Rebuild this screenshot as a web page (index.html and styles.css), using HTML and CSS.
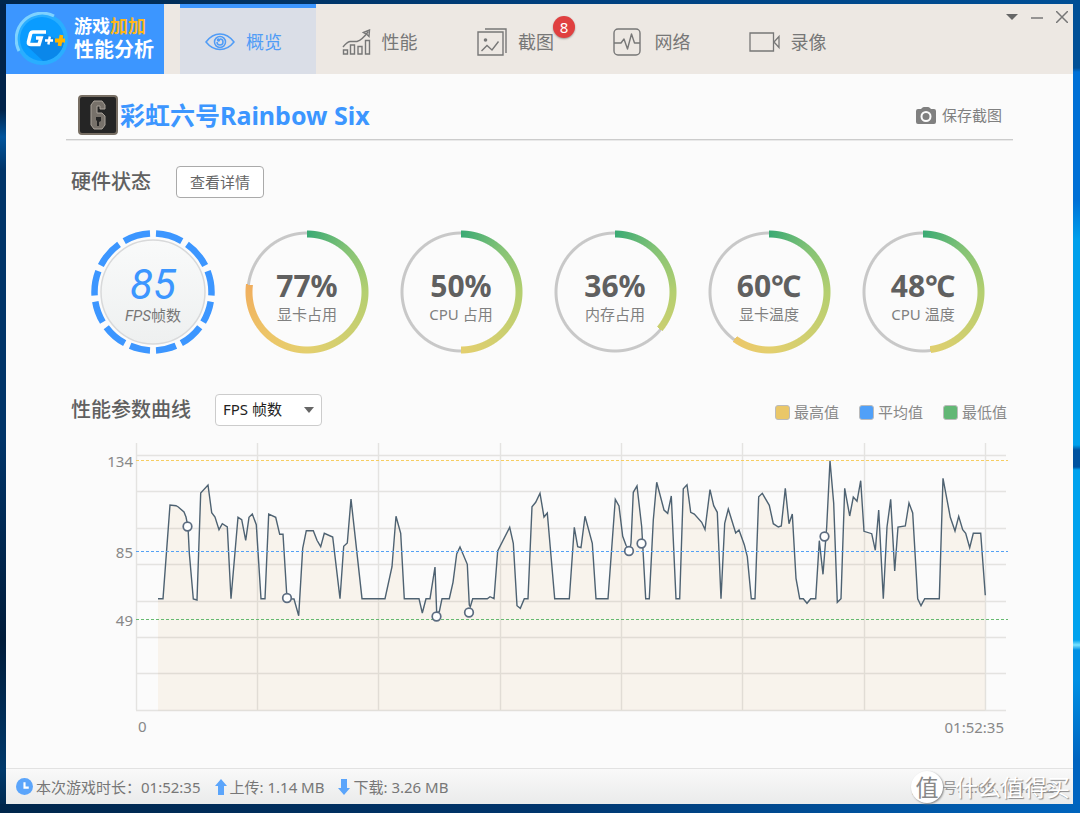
FILE: index.html
```html
<!DOCTYPE html>
<html lang="zh-CN">
<head>
<meta charset="utf-8">
<meta name="viewport" content="width=device-width, initial-scale=1">
<title>游戏加加 性能分析</title>
<link rel="stylesheet" href="styles.css">
</head>
<body>
<div class="window">
  <header class="topbar">
    <div class="brand">
      <svg class="brand-logo" width="54" height="54" viewBox="0 0 54 54" aria-hidden="true">
        <circle cx="27" cy="27" r="26" fill="#2aaeff"/>
        <circle cx="27" cy="27" r="22" fill="#0a9cff"/>
        <path d="M12 34 28 49A22 22 0 0 0 49 30L30 22Z" fill="#0a87ea"/>
        <path d="M4 39A26 26 0 0 1 39 4" fill="none" stroke="#7fd2ff" stroke-width="3"/>
        <path d="M31 20H18Q16 20 15.500 22L13.500 30Q13 32.500 16 32.500H24L26 26H21" fill="none" stroke="#fff" stroke-width="3.600"/>
        <path d="M30 28.500H38M34.800 24.500 33.400 32.500" stroke="#fff" stroke-width="2.400"/>
        <path d="M40 28.500H50M46.500 23 44.500 34" stroke="#ffb400" stroke-width="3.800"/>
      </svg>
      <div class="brand-text">
        <div class="brand-name">游戏<span class="brand-accent">加加</span></div>
        <div class="brand-sub">性能分析</div>
      </div>
    </div>
    <nav class="tabs">
      <a class="tab tab-active" href="#overview">
        <svg width="30" height="20" viewBox="0 0 30 20" fill="none" stroke="currentColor" stroke-width="1.500" aria-hidden="true">
          <path d="M1 10Q7 2 15 2T29 10Q23 17.500 15 17.500T1 10Z"/><circle cx="15" cy="10" r="5.500"/><path d="M12 10A3 3 0 1 0 15 7"/><circle cx="13.500" cy="8" r="1" fill="currentColor"/>
        </svg>
        <span>概览</span>
      </a>
      <a class="tab" href="#performance">
        <svg width="29" height="26" viewBox="0 0 29 26" fill="none" stroke="currentColor" stroke-width="1.400" aria-hidden="true">
          <path d="M1.500 21h4v4h-4zM8.500 16h4v9h-4zM16 17.500h4V25h-4zM23.500 11.500h4V25h-4zM1 18Q5 13 8 12.500H15Q20 11 26 3M21.500 3.500 27.500 1 27 7.500 24.500 5Z"/>
        </svg>
        <span>性能</span>
      </a>
      <a class="tab" href="#captures">
        <svg width="30" height="28" viewBox="0 0 30 28" fill="none" stroke="currentColor" stroke-width="1.400" aria-hidden="true">
          <path d="M1 4h25v23H1zM8 1H29V25M4.500 23 10 17.500 15 22 21.500 13.500"/><circle cx="8.500" cy="12" r="1.800" fill="currentColor" stroke="none"/>
        </svg>
        <span class="badge-anchor">截图<span class="badge">8</span></span>
      </a>
      <a class="tab tab-wide" href="#network">
        <svg width="28" height="28" viewBox="0 0 28 28" fill="none" stroke="currentColor" stroke-width="1.400" aria-hidden="true">
          <rect x="1" y="1" width="26" height="26" rx="4"/><path d="M1 15H8L11 11 14.500 21 18.500 6 21.500 15H27" stroke-linejoin="round"/>
        </svg>
        <span>网络</span>
      </a>
      <a class="tab" href="#recordings">
        <svg width="31" height="20" viewBox="0 0 31 20" fill="none" stroke="currentColor" stroke-width="1.300" aria-hidden="true">
          <path d="M1 1h23.500v18H1zM30 4.500V15.500L25 10Z"/>
        </svg>
        <span>录像</span>
      </a>
    </nav>
    <div class="window-controls">
      <button type="button" class="control" aria-label="菜单"><svg width="12" height="12" viewBox="0 0 12 12"><path d="M0 3H12L6 9Z" fill="#666"/></svg></button>
      <button type="button" class="control" aria-label="最小化"><svg width="12" height="12" viewBox="0 0 12 12"><path d="M0 7H12" stroke="#777" stroke-width="1.500"/></svg></button>
      <button type="button" class="control" aria-label="关闭"><svg width="12" height="12" viewBox="0 0 12 12"><path d="M0 0 12 12M12 0 0 12" stroke="#777" stroke-width="1.500"/></svg></button>
    </div>
  </header>

  <main class="content">
    <div class="title-row">
      <svg class="game-icon" width="40" height="40" viewBox="0 0 40 40" aria-hidden="true">
        <rect x="1" y="1" width="38" height="38" rx="3" fill="#252525" stroke="#776e63" stroke-width="2"/>
        <path d="M27 13V10L24 6H16L13 10V30L16 34H24L27 30V21L24 18H19V11H22V14H27Z" fill="#77716a" stroke="#aaa39a"/>
        <path d="M18 22H23V26L21 27V31H19V26L18 25Z" fill="#252525"/>
      </svg>
      <h1 class="game-title">彩虹六号Rainbow Six</h1>
      <button type="button" class="save-shot">
        <svg width="20" height="17" viewBox="0 0 20 17" aria-hidden="true"><path d="M6 1Q7 0 8 0H12Q13 0 14 1L15 2H18Q20 2 20 4V15Q20 17 18 17H2Q0 17 0 15V4Q0 2 2 2H5Z" fill="#808080"/><circle cx="10" cy="9.500" r="4.500" fill="#808080" stroke="#fbfbfb" stroke-width="2"/></svg>
        <span>保存截图</span>
      </button>
    </div>

    <section>
      <div class="section-head hardware-head">
        <h2 class="section-title">硬件状态</h2>
        <button type="button" class="detail-button">查看详情</button>
      </div>
      <div class="gauges">
        <div class="gauge">
          <svg class="fps-ring" width="124" height="124" viewBox="0 0 124 124" aria-hidden="true">
            <defs><linearGradient id="dial" x1="0" y1="0" x2="0" y2="1"><stop offset="0" stop-color="#f9fafa"/><stop offset="1" stop-color="#eef0f0"/></linearGradient></defs>
            <circle cx="62" cy="62" r="52" fill="url(#dial)" stroke="#d8d9da" stroke-width="1.500"/>
            <g fill="none" stroke="#3c96ff" stroke-width="6.500">
              <path pathLength="180" stroke-dasharray="0 3 26.500 6 27.500 6 24.500 6 21.500 6 24 6 20 3" d="M62 3.500A58.500 58.500 0 0 1 62 120.500"/>
              <path pathLength="180" stroke-dasharray="0 3 26.500 6 27.500 6 24.500 6 21.500 6 24 6 20 3" d="M62 3.500A58.500 58.500 0 0 0 62 120.500"/>
            </g>
          </svg>
          <div class="gauge-text fps-text"><strong class="fps-value">85</strong><span class="gauge-label"><i class="fps-unit">FPS</i>帧数</span></div>
        </div>
        <div class="gauge gauge-track"><div class="ring" style="--value: 77%"></div><div class="gauge-text"><strong class="gauge-value">77%</strong><span class="gauge-label">显卡占用</span></div></div>
        <div class="gauge gauge-track"><div class="ring" style="--value: 50%"></div><div class="gauge-text"><strong class="gauge-value">50%</strong><span class="gauge-label">CPU 占用</span></div></div>
        <div class="gauge gauge-track"><div class="ring" style="--value: 36%"></div><div class="gauge-text"><strong class="gauge-value">36%</strong><span class="gauge-label">内存占用</span></div></div>
        <div class="gauge gauge-track"><div class="ring" style="--value: 60%"></div><div class="gauge-text"><strong class="gauge-value">60℃</strong><span class="gauge-label">显卡温度</span></div></div>
        <div class="gauge gauge-track"><div class="ring" style="--value: 48%"></div><div class="gauge-text"><strong class="gauge-value">48℃</strong><span class="gauge-label">CPU 温度</span></div></div>
      </div>
    </section>

    <section>
      <div class="section-head curve-head">
        <h2 class="section-title"><label for="metric">性能参数曲线</label></h2>
        <div class="select-box">
          <select id="metric" class="metric-select"><option>FPS 帧数</option></select>
          <svg class="select-arrow" width="10" height="6" viewBox="0 0 10 6" aria-hidden="true"><path d="M0 0H10L5 6Z" fill="#666"/></svg>
        </div>
        <ul class="legend">
          <li class="legend-item"><span class="swatch swatch-max"></span>最高值</li>
          <li class="legend-item"><span class="swatch swatch-avg"></span>平均值</li>
          <li class="legend-item"><span class="swatch swatch-min"></span>最低值</li>
        </ul>
      </div>
      <svg class="chart" viewBox="66 440 947 300" role="img" aria-label="FPS 帧数曲线">
        <path class="chart-area" d="M158 710.500V598.700H163L170 505 176 505.700 178.300 507 184 512 186 517 188 527 189.300 553 193.300 599 197 600 200.700 493 208 485 211.700 512.700 215 517 219 529.700 222.300 523.700 227.300 527 231 598.700 238 517.300 241.700 519.700 245.700 540.300 249 517.300 252.300 514 256.300 524.700 261 598.700H265L268.700 514 275.700 517.300 279.700 534.300H283L287 598.700 294 599 298.700 615.700 302.700 548.300 306.300 530.700H313.300L317 540.300 320.700 546.700 324.300 533.300 332.700 537 340 598.700 343.700 546.300 347.300 543 351 499 362 598.700H385L392 566.700 396 516.300 400.700 533.300 404.300 598.700H419L422.300 613 426 598.700H430L435 567 436.700 613 439.300 611.700 442 598.700H449.300L453 582.300 456.700 554 460 547 467.300 564.300 469.300 605 470.300 606.700 472.700 598.700H487.300L490 596.700 494 598.700 497.700 551 509.700 527.300 513.300 543.300 517 605.700 520.300 608.300 524.300 598.700H528L532 506.700 535.700 502.300 540 493.300 544 517 547.300 513 554.700 598.700H569.300L574.300 527.300 577.700 546.700 581 547.700 585 516.300 592.300 543.300 596 598.700H608L615.300 499.300 619 506 622.700 536.300 626 545.300 629.700 551 631 543 633.300 492.300 637 486 641.700 526.700 645.700 598.700H649.300L653.300 520 656.700 482.300 664 510 667.700 513.300 671.300 496 676 598.700H679.700L683.300 488.700 687 484.700 690.700 512.300 694.300 514 701.700 522.300 705 529.500 710 489.700 713.700 505.700 717.300 512.300 721 598.700 724.700 523.300 728.300 509 735.700 533 739 530 744.300 544.700 747.300 556.700 751.300 598.700H755L758.700 496.700 762.300 493.300 769.300 505.300 773.300 523.700 778.300 527 781.300 526 785.300 488.300 789 523.700 792.300 514 796 578.300 799.700 598.700H803.300L807 603.300 810.700 598.700H815.700L819.300 540.700 823 574.300 826.700 526.700 830 460.700 833.700 503.300 837.300 602.300 841 598.700 844.700 488.300 849.700 516 853.300 497 857 501.300 860.700 480.700 864 531.300 871.700 533.700 875.300 550.300 878.700 510 883.300 598.700 887 527 890.700 499.300 894.700 571 898 527 905.300 526 909 503 912.700 513 917.700 598.700 921 605.700 924.700 598.700H939.300L943 478.300 950.300 517.300 955 531 958.700 516.300 962.700 529.700 965.700 533.300 969.700 547.700 973.300 533.300H980.700L985.300 595.300V710.500Z"/>
        <path class="chart-grid" d="M136 455.500H1006M136 491.500H1006M136 528.500H1006M136 564.500H1006M136 601.500H1006M136 637.500H1006M136 673.500H1006M136 710.500H1006M136.500 443V710M257.500 443V710M378.500 443V710M500.500 443V710M621.500 443V710M742.500 443V710M864.500 443V710M985.500 443V710"/>
        <path class="chart-line" d="M158 598.700H163L170 505 176 505.700 178.300 507 184 512 186 517 188 527 189.300 553 193.300 599 197 600 200.700 493 208 485 211.700 512.700 215 517 219 529.700 222.300 523.700 227.300 527 231 598.700 238 517.300 241.700 519.700 245.700 540.300 249 517.300 252.300 514 256.300 524.700 261 598.700H265L268.700 514 275.700 517.300 279.700 534.300H283L287 598.700 294 599 298.700 615.700 302.700 548.300 306.300 530.700H313.300L317 540.300 320.700 546.700 324.300 533.300 332.700 537 340 598.700 343.700 546.300 347.300 543 351 499 362 598.700H385L392 566.700 396 516.300 400.700 533.300 404.300 598.700H419L422.300 613 426 598.700H430L435 567 436.700 613 439.300 611.700 442 598.700H449.300L453 582.300 456.700 554 460 547 467.300 564.300 469.300 605 470.300 606.700 472.700 598.700H487.300L490 596.700 494 598.700 497.700 551 509.700 527.300 513.300 543.300 517 605.700 520.300 608.300 524.300 598.700H528L532 506.700 535.700 502.300 540 493.300 544 517 547.300 513 554.700 598.700H569.300L574.300 527.300 577.700 546.700 581 547.700 585 516.300 592.300 543.300 596 598.700H608L615.300 499.300 619 506 622.700 536.300 626 545.300 629.700 551 631 543 633.300 492.300 637 486 641.700 526.700 645.700 598.700H649.300L653.300 520 656.700 482.300 664 510 667.700 513.300 671.300 496 676 598.700H679.700L683.300 488.700 687 484.700 690.700 512.300 694.300 514 701.700 522.300 705 529.500 710 489.700 713.700 505.700 717.300 512.300 721 598.700 724.700 523.300 728.300 509 735.700 533 739 530 744.300 544.700 747.300 556.700 751.300 598.700H755L758.700 496.700 762.300 493.300 769.300 505.300 773.300 523.700 778.300 527 781.300 526 785.300 488.300 789 523.700 792.300 514 796 578.300 799.700 598.700H803.300L807 603.300 810.700 598.700H815.700L819.300 540.700 823 574.300 826.700 526.700 830 460.700 833.700 503.300 837.300 602.300 841 598.700 844.700 488.300 849.700 516 853.300 497 857 501.300 860.700 480.700 864 531.300 871.700 533.700 875.300 550.300 878.700 510 883.300 598.700 887 527 890.700 499.300 894.700 571 898 527 905.300 526 909 503 912.700 513 917.700 598.700 921 605.700 924.700 598.700H939.300L943 478.300 950.300 517.300 955 531 958.700 516.300 962.700 529.700 965.700 533.300 969.700 547.700 973.300 533.300H980.700L985.300 595.300"/>
        <path class="guide guide-max" d="M136 460.500H1008"/>
        <path class="guide guide-avg" d="M136 551.500H1008"/>
        <path class="guide guide-min" d="M136 619.500H1008"/>
        <g class="chart-dots">
          <circle cx="187.500" cy="526.500" r="4.300"/><circle cx="287" cy="598" r="4.300"/><circle cx="436.500" cy="616.500" r="4.300"/><circle cx="469" cy="612.500" r="4.300"/><circle cx="629" cy="551" r="4.300"/><circle cx="641.500" cy="543.500" r="4.300"/><circle cx="824.500" cy="536.500" r="4.300"/>
        </g>
        <g class="chart-text">
          <text x="133" y="467" text-anchor="end">134</text>
          <text x="133" y="558" text-anchor="end">85</text>
          <text x="133" y="626" text-anchor="end">49</text>
          <text x="138" y="732">0</text>
          <text x="1004" y="733" text-anchor="end">01:52:35</text>
        </g>
      </svg>
    </section>
  </main>

  <footer class="statusbar">
    <span class="status"><svg width="17" height="17" viewBox="0 0 16 16" aria-hidden="true"><circle cx="8" cy="8" r="8" fill="#5ba5fb"/><path d="M8 4V9H12" fill="none" stroke="#fff" stroke-width="2"/></svg><span>本次游戏时长：01:52:35</span></span>
    <span class="status"><svg width="12" height="16" viewBox="0 0 12 16" aria-hidden="true"><path d="M6 0 12 7H9V16H3V7H0Z" fill="#5ba5fb"/></svg><span>上传: 1.14 MB</span></span>
    <span class="status"><svg width="12" height="16" viewBox="0 0 12 16" aria-hidden="true"><path d="M6 16 12 9H9V0H3V9H0Z" fill="#5ba5fb"/></svg><span>下载: 3.26 MB</span></span>
    <span class="version">版本号: 2.65.104.1221</span>
    <div class="watermark"><span class="watermark-seal">值</span><span>什么值得买</span></div>
  </footer>
</div>
</body>
</html>
```
FILE: styles.css
```css
* { box-sizing: border-box; }

body {
  margin: 0;
  min-height: 100vh;
  padding: 4px 7px 9px 6px;
  display: flex;
  font-family: "Noto Sans", "Noto Sans CJK SC", sans-serif;
  font-size: 15px;
  line-height: 20px;
  color: #777;
  background:
    linear-gradient(90deg, #00264b, #003f7d 50%, #004f96) top / 100% 4px no-repeat,
    linear-gradient(90deg, #00264b, #00356c 50%, #0064bd) bottom / 100% 9px no-repeat,
    linear-gradient(#004f96 0 68px, #0070d6 72px 200px, #00a0ec 240px 445px, #0052a0 450px 467px, #00a2ee 470px 640px, #7ce3ff 645px, #0090e4 650px 680px, #0064c0 760px) right / 7px 100% no-repeat,
    linear-gradient(#00234a 0 110px, #00549c 137px, #003468 170px 440px, #001c3a 640px, #00396b 770px, #00264b) left / 6px 100% no-repeat,
    #003468;
}

h1, h2, ul { margin: 0; padding: 0; }
button, select { font: inherit; color: inherit; }
button { cursor: pointer; }
svg { display: block; flex: none; }

.window {
  flex: 1;
  min-width: 0;
  display: flex;
  flex-direction: column;
  background: #fbfbfb;
}

.topbar {
  display: flex;
  height: 70px;
  background: #ede8e3;
}

.brand {
  display: flex;
  align-items: center;
  gap: 5px;
  width: 158px;
  padding-left: 9px;
  margin-right: 16px;
  background: #3c96ff;
  color: #fff;
  font-weight: 700;
  white-space: nowrap;
}
.brand-name { font-size: 18px; line-height: 22px; }
.brand-sub { font-size: 20px; line-height: 26px; }
.brand-accent { color: #ffb71c; }

.tabs { display: flex; }
.tab {
  display: flex;
  align-items: center;
  justify-content: center;
  gap: 11px;
  width: 136px;
  padding: 6px 9px 0 0;
  font-size: 18px;
  color: #777;
  text-decoration: none;
}
.tab-wide { gap: 14px; }
.tab-active {
  padding-top: 2px;
  border-top: 4px solid #3c96ff;
  background: #dadee7;
  color: #509cf6;
}

.badge-anchor { position: relative; }
.badge {
  position: absolute;
  left: 35px;
  top: -16px;
  width: 22px;
  height: 22px;
  border-radius: 50%;
  background: #e04040;
  box-shadow: 0 1px 2px #0005;
  color: #fff;
  font-size: 15px;
  line-height: 22px;
  text-align: center;
}

.window-controls {
  display: flex;
  align-items: flex-start;
  gap: 13px;
  margin-left: auto;
  padding: 7px 5px 0 0;
}
.control { padding: 0; border: 0; background: none; }

.content { flex: 1; padding: 17px 60px 0; }

.title-row {
  display: flex;
  align-items: center;
  height: 49px;
  padding: 0 11px 0 12px;
  border-bottom: 1px solid #ccc;
  box-shadow: 0 1px 0 #e9e9e9;
}
.game-title {
  padding-left: 2px;
  font-size: 25px;
  line-height: 32px;
  color: #3c96ff;
}
.save-shot {
  display: flex;
  align-items: center;
  gap: 6px;
  margin-left: auto;
  padding: 0;
  border: 0;
  background: none;
  color: #808080;
}

.section-head { display: flex; align-items: center; padding: 0 6px 0 5px; }
.hardware-head { margin-top: 26px; gap: 25px; }
.curve-head { margin-top: 40px; gap: 24px; }
.section-title {
  font-size: 20px;
  line-height: 28px;
  font-weight: 500;
  color: #606060;
}
.detail-button {
  width: 88px;
  height: 32px;
  padding: 0;
  border: 1px solid #aaa;
  border-radius: 4px;
  background: #fff;
  color: #666;
}

.gauges {
  display: flex;
  justify-content: space-between;
  margin-top: 32px;
  padding: 0 28px 0 25px;
}
.gauge { display: grid; width: 124px; height: 124px; }
.gauge > * { grid-area: 1 / 1; }
.gauge-track {
  background: radial-gradient(closest-side, transparent 57px, #c8c8c8 58px, #c8c8c8 60px, transparent 61px);
}
.ring {
  background: conic-gradient(#3aaa74, #84c376 12%, #b4cf70 25%, #cccf70 37%, #e4cf6e 50%, #edc568 62%, #f0ae5e 77%);
  mask:
    radial-gradient(closest-side, transparent 54px, #000 55px, #000 61px, transparent 62px),
    conic-gradient(#000 var(--value), transparent 0);
  mask-composite: intersect;
}
.gauge-text {
  display: flex;
  flex-direction: column;
  align-items: center;
  padding-top: 37px;
  color: #808080;
}
.gauge-value { font-size: 30px; line-height: 37px; color: #606060; }
.fps-text { z-index: 1; padding-top: 34px; color: #777; }
.fps-value {
  font-family: Roboto, sans-serif;
  font-size: 42px;
  font-style: italic;
  font-weight: 400;
  line-height: 41px;
  color: #3c96ff;
}
.fps-unit { font-family: Roboto, sans-serif; }
.gauge-label { line-height: 20px; white-space: nowrap; }

.select-box { display: grid; width: 107px; height: 32px; }
.metric-select {
  grid-area: 1 / 1;
  appearance: none;
  padding: 0 20px 2px 7px;
  border: 1px solid #ccc;
  border-radius: 4px;
  background: #fff;
  color: #222;
  font-size: 15px;
}
.select-arrow {
  grid-area: 1 / 1;
  place-self: center end;
  margin-right: 8px;
  pointer-events: none;
}

.legend {
  display: flex;
  gap: 20px;
  margin-left: auto;
  padding-top: 4px;
  list-style: none;
}
.legend-item { display: flex; align-items: center; gap: 4px; color: #888; }
.swatch {
  width: 15px;
  height: 15px;
  border: 1px solid #bbb;
  border-radius: 3px;
}
.swatch-max { background: #eac768; }
.swatch-avg { background: #50a0f8; }
.swatch-min { background: #62b775; }

.chart { width: 100%; margin-top: 14px; }
.chart-area { fill: #f8f3ec; }
.chart-grid { fill: none; stroke: #908c84; stroke-opacity: .22; stroke-width: 1.4; }
.chart-line { fill: none; stroke: #4e6272; stroke-width: 1.4; }
.guide { stroke-dasharray: 3 2; stroke-width: 1.2; }
.guide-max { stroke: #f6cd62; }
.guide-avg { stroke: #55a2f5; }
.guide-min { stroke: #66ba70; }
.chart-dots { fill: #fff; stroke: #5c6c80; stroke-width: 1.7; }
.chart-text { fill: #888; font-size: 15px; }

.statusbar {
  position: relative;
  display: flex;
  align-items: center;
  gap: 14px;
  height: 36px;
  padding: 0 10px;
  border-top: 1px solid #e2e2e2;
  background: linear-gradient(#f9f9f9, #eaebeb);
  white-space: nowrap;
}
.status { display: flex; align-items: center; gap: 3px; }
.version { margin-left: auto; color: #999; }
.watermark {
  position: absolute;
  right: 3px;
  bottom: 1px;
  display: flex;
  align-items: center;
  gap: 12px;
  color: #fff;
  font-size: 23px;
  line-height: 32px;
  text-shadow: 1px 1px 1px #888;
}
.watermark-seal {
  width: 32px;
  height: 32px;
  border-radius: 50%;
  background: #fff;
  box-shadow: 1px 1px 2px #888;
  color: #888;
  text-align: center;
  text-shadow: none;
}
```
